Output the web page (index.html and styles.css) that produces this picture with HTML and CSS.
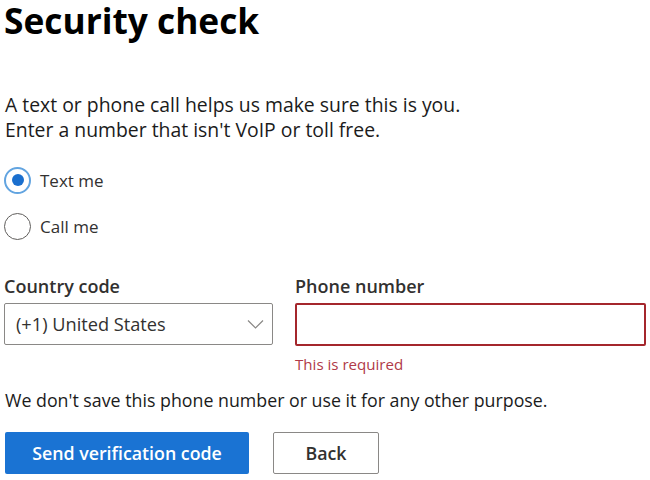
FILE: index.html
```html
<!DOCTYPE html>
<html lang="en">
<head>
    <meta charset="UTF-8">
    <meta name="viewport" content="width=device-width, initial-scale=1.0">
    <title>Security check</title>
    <link rel="stylesheet" href="styles.css">
</head>
<body>
    <div class="container">
        <h1>Security check</h1>
        <p class="intro">A text or phone call helps us make sure this is you.<br>Enter a number that isn't VoIP or toll free.</p>

        <div class="choices">
            <label class="radio">
                <input type="radio" name="method" value="text" checked>
                <span class="dot"></span>
                <span class="radio-text">Text me</span>
            </label>
            <label class="radio">
                <input type="radio" name="method" value="call">
                <span class="dot"></span>
                <span class="radio-text">Call me</span>
            </label>
        </div>

        <div class="fields">
            <div class="field">
                <label class="field-label" for="country">Country code</label>
                <div class="select" id="country">
                    <span>(+1) United States</span>
                    <svg width="17" height="10" viewBox="0 0 17 10"><path d="M1 1.5 L8.5 9 L16 1.5" fill="none" stroke="#8a8886" stroke-width="1.2"/></svg>
                </div>
            </div>
            <div class="field">
                <label class="field-label" for="phone">Phone number</label>
                <input class="phone" id="phone" type="tel">
                <div class="error-text">This is required</div>
            </div>
        </div>

        <p class="note">We don't save this phone number or use it for any other purpose.</p>

        <div class="actions">
            <button class="primary">Send verification code</button>
            <button class="secondary">Back</button>
        </div>
    </div>
</body>
</html>
```

FILE: styles.css
```css
body {
    font-family: "Open Sans", "Noto Sans", sans-serif;
    margin: 0;
    padding: 0;
    background-color: white;
    color: #1b1b1b;
}
.container {
    padding: 0 4px;
}
h1 {
    margin: 0;
    font-size: 35.3px;
    font-weight: 700;
    line-height: 40px;
    color: #000;
}
.intro {
    margin: 52px 0 0 1px;
    font-size: 19.4px;
    line-height: 25px;
}
.choices {
    display: flex;
    flex-direction: column;
    gap: 18px;
    margin-top: 24px;
}
.radio {
    display: flex;
    align-items: center;
    gap: 9px;
    height: 28px;
    font-size: 17px;
    color: #323130;
}
.radio input {
    display: none;
}
.dot {
    width: 27px;
    height: 27px;
    border: 1.5px solid #605e5c;
    border-radius: 50%;
    box-sizing: border-box;
    position: relative;
}
.radio input:checked + .dot {
    border: 2px solid #62a4e0;
}
.radio input:checked + .dot::after {
    content: "";
    position: absolute;
    left: 5.5px;
    top: 5.5px;
    width: 12px;
    height: 12px;
    border-radius: 50%;
    background-color: #1a6fce;
}
.fields {
    display: grid;
    grid-template-columns: 269px 351px;
    gap: 22px;
    margin-top: 34px;
}
.field-label {
    display: block;
    font-size: 18px;
    line-height: 24px;
    font-weight: 600;
    color: #323130;
    margin-bottom: 5px;
}
.select {
    display: flex;
    align-items: center;
    justify-content: space-between;
    height: 42px;
    box-sizing: border-box;
    border: 1px solid #8a8886;
    border-radius: 2px;
    padding: 0 8px 0 11px;
    font-size: 18.2px;
    color: #323130;
}
.phone {
    display: block;
    width: 100%;
    height: 43px;
    box-sizing: border-box;
    border: 2px solid #a4262c;
    border-radius: 2px;
    outline: none;
}
.error-text {
    margin-top: 8px;
    font-size: 15.1px;
    line-height: 20px;
    color: #b03a48;
}
.note {
    margin: 14px 0 0 1px;
    font-size: 17.8px;
    line-height: 24px;
}
.actions {
    display: flex;
    gap: 24px;
    margin-top: 20px;
}
button {
    height: 42px;
    font-family: inherit;
    font-size: 17.8px;
    font-weight: 600;
    border-radius: 2px;
    cursor: pointer;
}
.primary {
    margin-left: 1px;
    width: 244px;
    background-color: #1a73d3;
    color: white;
    border: none;
}
.secondary {
    width: 106px;
    background-color: white;
    color: #323130;
    border: 1px solid #8a8886;
}
```
